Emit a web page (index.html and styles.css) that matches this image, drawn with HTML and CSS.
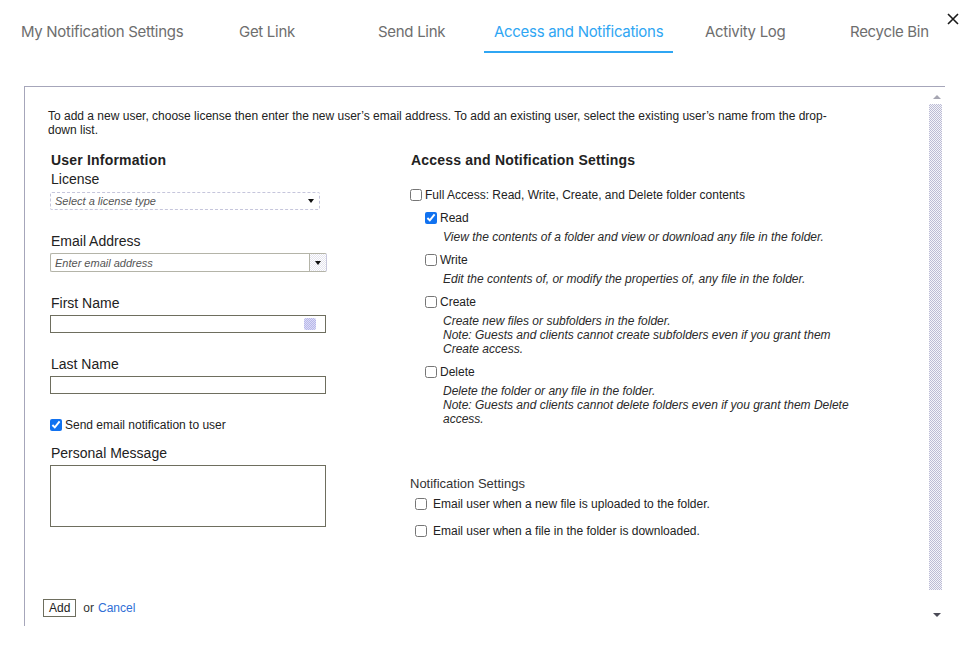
FILE: index.html
```html
<!DOCTYPE html>
<html lang="en">
<head>
  <meta charset="UTF-8">
  <title>Access and Notifications</title>
  <link rel="stylesheet" href="styles.css">
</head>
<body>

  <div class="tabs">
    <div class="tab">My Notification Settings</div>
    <div class="tab">Get Link</div>
    <div class="tab">Send Link</div>
    <div class="tab active">Access and Notifications</div>
    <div class="tab">Activity Log</div>
    <div class="tab">Recycle Bin</div>
  </div>
  <div class="close-icon">
    <svg width="12" height="12" viewBox="0 0 12 12"><path d="M1 1L11 11M11 1L1 11" stroke="#1a1a1a" stroke-width="1.6"/></svg>
  </div>

  <div class="panel">
    <div class="content">
      <p class="intro">To add a new user, choose license then enter the new user’s email address. To add an existing user, select the existing user’s name from the drop-down list.</p>

      <div class="cols">
        <!-- user info -->
        <div class="col-left">
          <h3>User Information</h3>
          <div class="label first">License</div>
          <div class="select-box">
            <span class="placeholder">Select a license type</span>
            <span class="caret"></span>
          </div>

          <div class="label">Email Address</div>
          <div class="combo">
            <span class="placeholder">Enter email address</span>
            <span class="combo-btn"><span class="caret"></span></span>
          </div>

          <div class="label">First Name</div>
          <div class="text-input"><span class="key-icon"></span></div>

          <div class="label">Last Name</div>
          <div class="text-input"></div>

          <label class="check-row notify">
            <input type="checkbox" checked> Send email notification to user
          </label>

          <div class="label msg">Personal Message</div>
          <div class="textarea"></div>
        </div>

        <!-- access settings -->
        <div class="col-right">
          <h3>Access and Notification Settings</h3>
          <label class="check-row full">
            <input type="checkbox"> Full Access: Read, Write, Create, and Delete folder contents
          </label>

          <div class="perm">
            <label class="check-row"><input type="checkbox" checked> Read</label>
            <div class="perm-desc">View the contents of a folder and view or download any file in the folder.</div>
          </div>
          <div class="perm">
            <label class="check-row"><input type="checkbox"> Write</label>
            <div class="perm-desc">Edit the contents of, or modify the properties of, any file in the folder.</div>
          </div>
          <div class="perm">
            <label class="check-row"><input type="checkbox"> Create</label>
            <div class="perm-desc">Create new files or subfolders in the folder.<br>Note: Guests and clients cannot create subfolders even if you grant them Create access.</div>
          </div>
          <div class="perm">
            <label class="check-row"><input type="checkbox"> Delete</label>
            <div class="perm-desc">Delete the folder or any file in the folder.<br>Note: Guests and clients cannot delete folders even if you grant them Delete access.</div>
          </div>

          <div class="notif-title">Notification Settings</div>
          <label class="check-row notif"><input type="checkbox"> Email user when a new file is uploaded to the folder.</label>
          <label class="check-row notif second"><input type="checkbox"> Email user when a file in the folder is downloaded.</label>
        </div>
      </div>

      <div class="actions">
        <button class="add-btn">Add</button>
        <span class="or">or</span>
        <a class="cancel" href="#">Cancel</a>
      </div>
    </div>

    <div class="scrollbar">
      <span class="arrow-up"></span>
      <div class="track"></div>
      <span class="arrow-down"></span>
    </div>
  </div>

</body>
</html>
```

FILE: styles.css
```css
body {
  margin: 0;
  background: white;
  font-family: "Liberation Sans", Arial, sans-serif;
  color: #222;
  position: relative;
}

/* tabs */
.tabs {
  display: grid;
  grid-template-columns: 218px 139px 116px 211px 145px 98px;
  padding-left: 11px;
  font-family: Inter, "Open Sans", sans-serif;
  font-size: 15px;
}

.tab {
  justify-self: start;
  padding: 23px 10px 10px;
  line-height: 18px;
  color: #6e6e6e;
  border-bottom: 2px solid transparent;
  white-space: nowrap;
  letter-spacing: -0.3px;
}

.tab.active {
  color: #2fa6f3;
  border-bottom-color: #2fa6f3;
}

.close-icon {
  position: absolute;
  top: 11px; right: 9px;
  width: 12px; height: 12px;
}

/* panel */
.panel {
  margin: 33px 23px 0 24px;
  height: 539px;
  border-top: 1px solid #a6a6ba;
  border-left: 1px solid #a6a6ba;
  display: flex;
}

.content {
  flex: 1;
  padding: 22px 0 0 23px;
  position: relative;
}

.intro {
  margin: 0;
  width: 786px;
  font-size: 12px;
  line-height: 14px;
}

.cols {
  display: flex;
  margin-top: 15px;
}

.col-left {
  width: 360px;
  padding-left: 2px;
}

.col-right {
  width: 450px;
}

h3 {
  margin: 0;
  font-size: 14px;
  line-height: 16px;
  letter-spacing: 0.2px;
  padding-left: 1px;
}

.label {
  font-size: 14px;
  line-height: 16px;
  margin: 23px 0 4px 1px;
}

.label.first {
  margin-top: 3px;
  margin-bottom: 5px;
}

.label.msg {
  margin-top: 13px;
}

.placeholder {
  font-style: italic;
  font-size: 11px;
  color: #555;
}

.caret {
  width: 0; height: 0;
  border-left: 3px solid transparent;
  border-right: 3px solid transparent;
  border-top: 4px solid #111;
}

.select-box {
  width: 259px;
  height: 16px;
  border: 1px dashed #c6c6dc;
  border-radius: 2px;
  display: flex;
  align-items: center;
  justify-content: space-between;
  padding: 0 5px 0 4px;
}

.combo {
  width: 271px;
  height: 17px;
  border: 1px solid #b4b4a8;
  border-right-color: #c8c8dc;
  border-radius: 2px;
  display: flex;
  align-items: center;
  justify-content: space-between;
  padding-left: 4px;
}

.combo-btn {
  width: 16px;
  height: 17px;
  border-left: 1px solid #b4b4a8;
  display: flex;
  align-items: center;
  justify-content: center;
  background: repeating-conic-gradient(#e4e4ee 0 25%, #fff 0 50%) 0 0/2px 2px;
}

.text-input {
  width: 274px;
  height: 16px;
  border: 1px solid #6e6e5e;
  display: flex;
  align-items: center;
  justify-content: flex-end;
}

.key-icon {
  width: 12px; height: 12px;
  margin-right: 9px;
  border-radius: 2px;
  background: repeating-conic-gradient(#b8b8ea 0 25%, #dcdcf6 0 50%) 0 0/2px 2px;
}

.textarea {
  width: 274px;
  height: 60px;
  border: 1px solid #6e6e5e;
}

/* checkboxes */
.check-row {
  display: flex;
  align-items: center;
  font-size: 12px;
  line-height: 14px;
}

.check-row input {
  width: 12px; height: 12px;
  margin: 0 3px 0 0;
  accent-color: #1172f0;
}

.notify {
  margin-top: 24px;
}

.full {
  margin-top: 20px;
}

.perm {
  margin: 9px 0 0 15px;
}

.perm-desc {
  margin: 5px 0 0 18px;
  width: 410px;
  font-size: 12px;
  line-height: 14px;
  font-style: italic;
  color: #2a2a2a;
}

.notif-title {
  margin-top: 50px;
  font-size: 13px;
  line-height: 16px;
  color: #333;
}

.notif {
  margin: 5px 0 0 5px;
}

.notif input {
  margin-right: 6px;
}

.notif.second {
  margin-top: 13px;
}

/* buttons */
.actions {
  position: absolute;
  left: 18px; top: 512px;
  display: flex;
  align-items: center;
  font-size: 12px;
}

.add-btn {
  font-family: "Liberation Sans", Arial, sans-serif;
  font-size: 12px;
  background: white;
  border: 1px solid #6e6e5e;
  padding: 1px 5px;
  height: 18px;
  color: #222;
}

.or {
  margin: 0 4px 0 7px;
  color: #333;
}

.cancel {
  color: #2f6fd6;
  text-decoration: none;
}

/* scrollbar */
.scrollbar {
  width: 17px;
  display: flex;
  flex-direction: column;
  align-items: center;
  padding-top: 8px;
}

.arrow-up {
  width: 0; height: 0;
  border-left: 4px solid transparent;
  border-right: 4px solid transparent;
  border-bottom: 4px solid #a6a6b2;
}

.track {
  width: 13px;
  height: 486px;
  margin: 5px 0 0 -2px;
  background: repeating-conic-gradient(#bcbcd4 0 25%, #f4f4fa 0 50%) 0 0/2px 2px;
}

.arrow-down {
  margin-top: 23px;
  width: 0; height: 0;
  border-left: 4px solid transparent;
  border-right: 4px solid transparent;
  border-top: 4px solid #4a4a56;
}
```
